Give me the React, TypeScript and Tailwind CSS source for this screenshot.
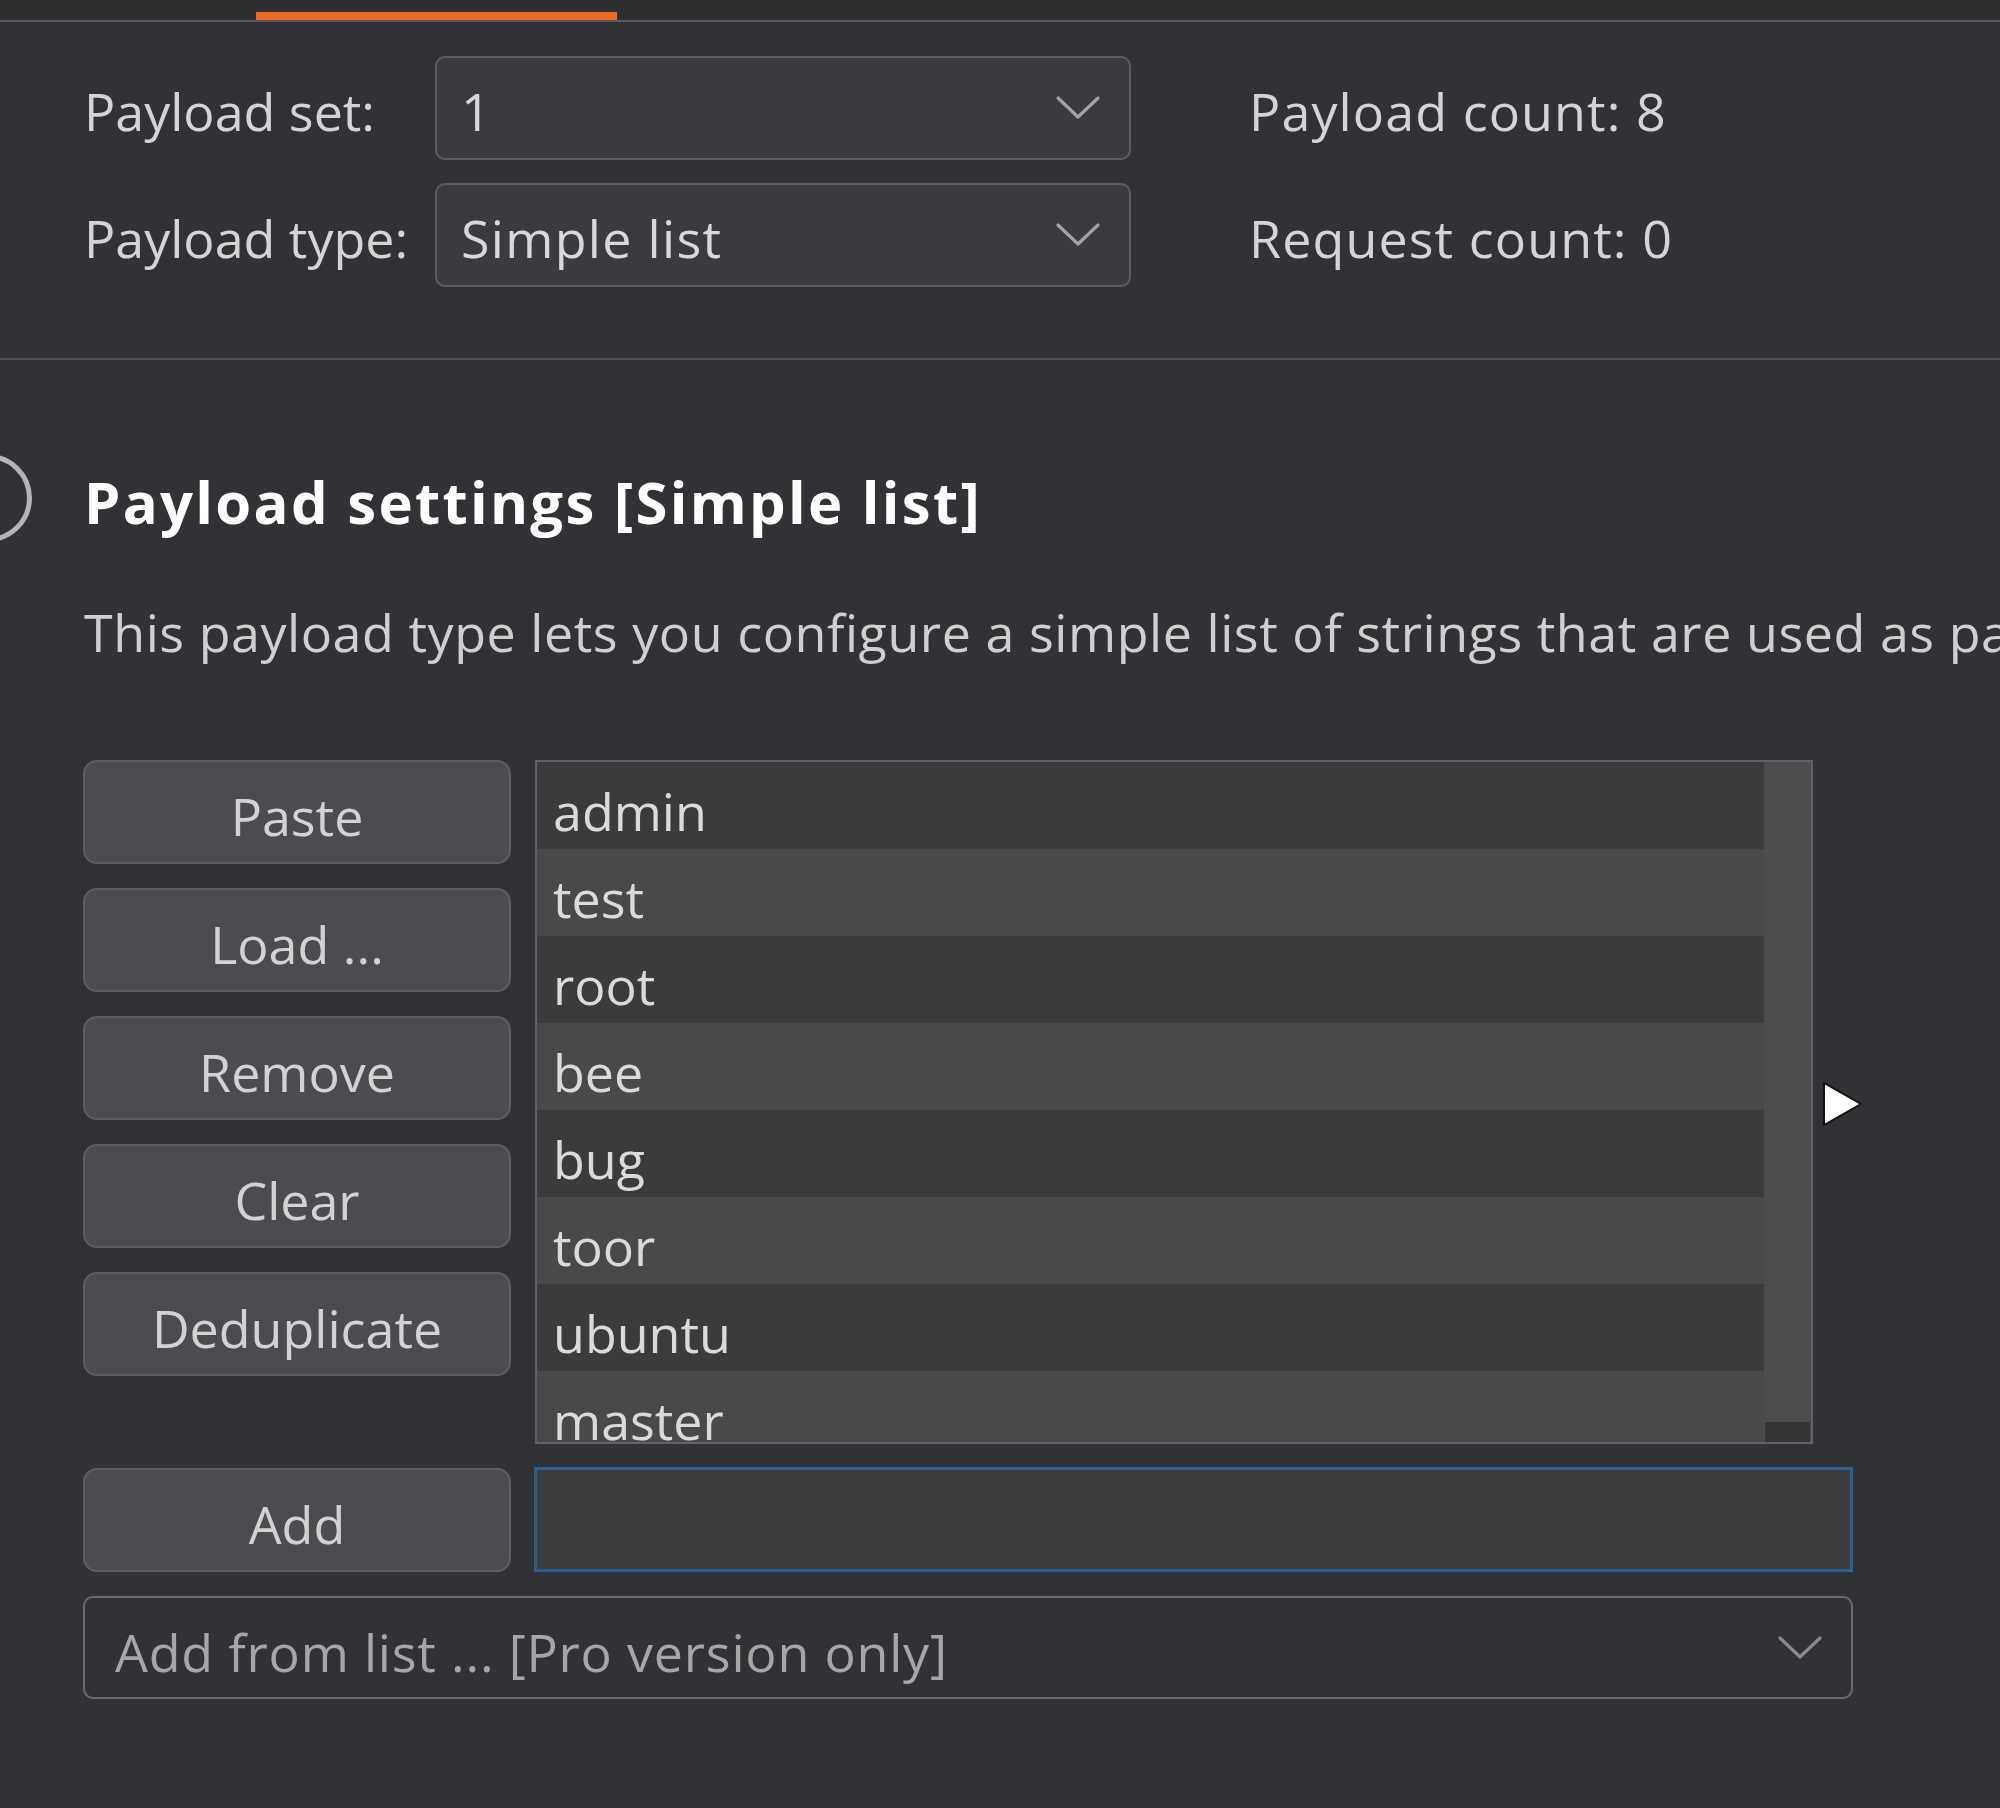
import React from "react";

const Chevron = ({ color = "#a3a3a3" }: { color?: string }) => (
  <svg width="46" height="26" viewBox="0 0 46 26" fill="none">
    <path d="M3 3 L23 22 L43 3" stroke={color} strokeWidth="3.2" strokeLinecap="round" strokeLinejoin="round" />
  </svg>
);

const items = ["admin", "test", "root", "bee", "bug", "toor", "ubuntu", "master"];
const buttons = ["Paste", "Load ...", "Remove", "Clear", "Deduplicate"];

export default function App() {
  return (
    <div className="relative w-[2000px] h-[1808px] overflow-hidden bg-[#313235] font-['Open_Sans','Noto_Sans',sans-serif] text-[52px] leading-none text-[#d4d4d4]">
      {/* top tab strip */}
      <div className="h-[20px] bg-[#2e2f31] flex items-end">
        <div className="ml-[256px] w-[361px] h-[8px] bg-[#e66a2c]" />
      </div>
      <div className="h-[2px] bg-[#56575a]" />

      {/* payload set / type */}
      <div className="flex items-start pl-[84px] pt-[34px]">
        <div className="grid grid-cols-[351px_696px] gap-y-[23px]">
          <div className="h-[104px] pt-[6px] flex items-center">Payload set:</div>
          <div className="h-[104px] rounded-[10px] border-2 border-[#5b5c5f] bg-[#3a3b3e] flex items-center justify-between pl-[24px] pr-[28px]">
            <span className="pt-[6px] text-[#d8d8d8]">1</span>
            <Chevron />
          </div>
          <div className="h-[104px] pt-[6px] flex items-center">Payload type:</div>
          <div className="h-[104px] rounded-[10px] border-2 border-[#5b5c5f] bg-[#3a3b3e] flex items-center justify-between pl-[24px] pr-[28px]">
            <span className="pt-[6px] text-[#d8d8d8] tracking-[1.3px]">Simple list</span>
            <Chevron />
          </div>
        </div>
        <div className="ml-[118px] flex flex-col gap-y-[23px] tracking-[1.1px]">
          <div className="h-[104px] pt-[6px] flex items-center">Payload count: 8</div>
          <div className="h-[104px] pt-[6px] flex items-center">Request count: 0</div>
        </div>
      </div>

      <div className="mt-[71px] h-[2px] bg-[#515255]" />

      {/* section header */}
      <div className="mt-[93px] -ml-[56px] flex items-center h-[90px]">
        <div className="w-[88px] h-[88px] rounded-full border-[5px] border-[#b4b4b4] shrink-0" />
        <div className="ml-[52px] pt-[8px] font-bold text-[58px] tracking-[2.3px] text-white whitespace-nowrap">
          Payload settings [Simple list]
        </div>
      </div>

      <div className="mt-[54px] h-[70px] pl-[84px] flex items-center whitespace-nowrap tracking-[0.55px] text-[#cfcfcf]">
        This payload type lets you configure a simple list of strings that are used as payloads.
      </div>

      {/* list area */}
      <div className="mt-[93px] pl-[83px] flex items-start">
        <div className="w-[428px] flex flex-col gap-y-[24px]">
          {buttons.map((b) => (
            <div
              key={b}
              className="h-[104px] pt-[8px] rounded-[14px] border-2 border-[#5c5e61] bg-[#4a4c4f] flex items-center justify-center text-[#d2d2d2]"
            >
              {b}
            </div>
          ))}
        </div>
        <div className="ml-[24px] w-[1278px] h-[684px] border-2 border-[#606164] flex overflow-hidden">
          <div className="flex-1 flex flex-col">
            {items.map((it, i) => (
              <div
                key={it}
                className={`h-[87px] shrink-0 pl-[16px] pt-[10px] flex items-center text-[#dadada] ${i % 2 === 0 ? "bg-[#3a3b3d]" : "bg-[#48494b]"}`}
              >
                {it}
              </div>
            ))}
          </div>
          <div className="w-[47px] bg-[#4b4c4e] flex flex-col justify-end">
            <div className="h-[20px] mx-[1px] bg-[#333436]" />
          </div>
        </div>
      </div>

      {/* add row */}
      <div className="mt-[23px] pl-[83px] flex items-center">
        <div className="w-[428px] h-[104px] pt-[8px] rounded-[14px] border-2 border-[#5c5e61] bg-[#4a4c4f] flex items-center justify-center text-[#d2d2d2]">
          Add
        </div>
        <div className="ml-[23px] w-[1319px] h-[105px] border-[3px] border-[#2e5e8e] bg-[#3b3c3e]" />
      </div>

      {/* add from list */}
      <div className="mt-[24px] ml-[83px] w-[1770px] h-[103px] rounded-[10px] border-2 border-[#6a6b6d] flex items-center justify-between pl-[30px] pr-[28px]">
        <span className="pt-[9px] tracking-[0.8px] text-[#a6a6a6]">Add from list ... [Pro version only]</span>
        <Chevron color="#8a8a8a" />
      </div>

      {/* cursor */}
      <svg className="absolute left-[1820px] top-[1080px]" width="44" height="48" viewBox="0 0 44 48">
        <path d="M4 3 L41 24 L4 45 Z" fill="#ffffff" stroke="#111" strokeWidth="2" strokeLinejoin="round" />
      </svg>
    </div>
  );
}
